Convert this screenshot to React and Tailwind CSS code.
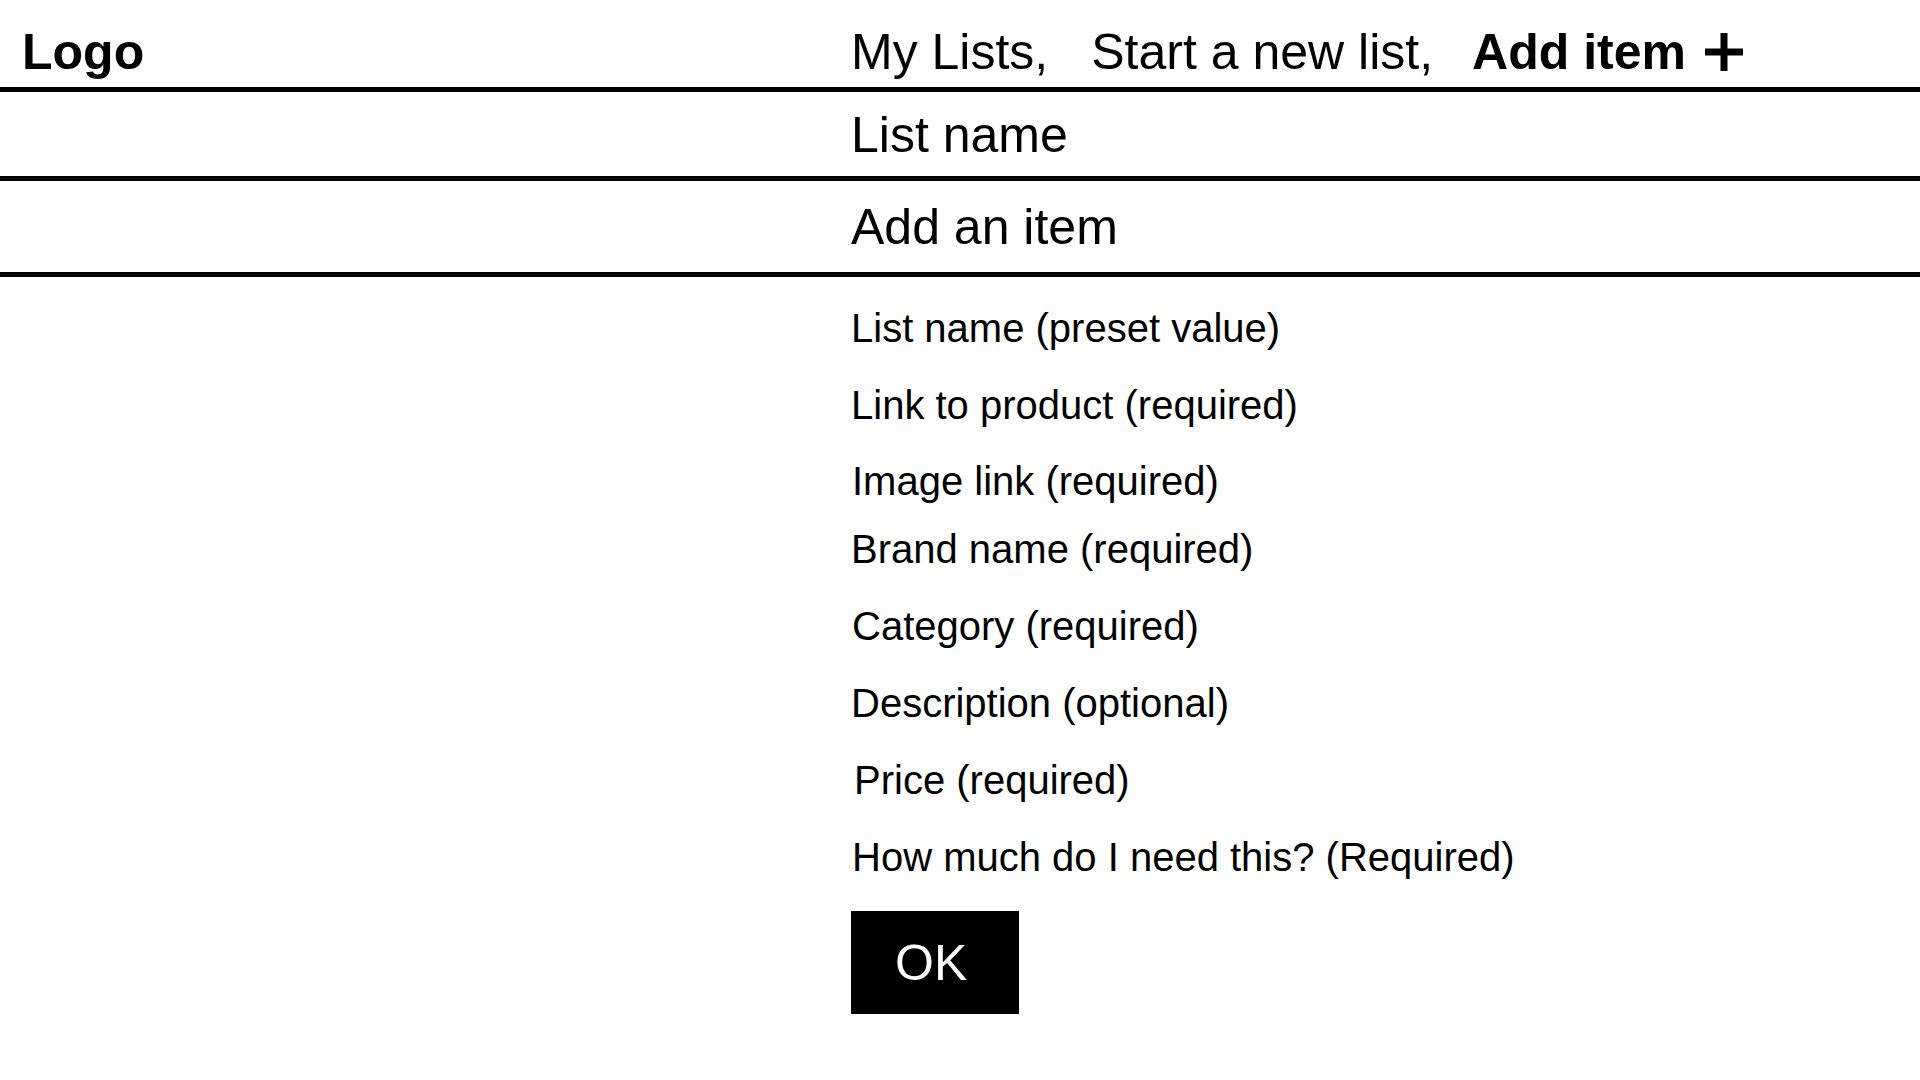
const fields = [
  { label: "List name (preset value)", cls: "mt-0" },
  { label: "Link to product (required)", cls: "mt-[31px]" },
  { label: "Image link (required)", cls: "mt-[30px] pl-[1px]" },
  { label: "Brand name (required)", cls: "mt-[22px]" },
  { label: "Category (required)", cls: "mt-[31px] pl-[1px]" },
  { label: "Description (optional)", cls: "mt-[31px]" },
  { label: "Price (required)", cls: "mt-[31px] pl-[3px]" },
  { label: "How much do I need this? (Required)", cls: "mt-[31px] pl-[1px]" },
]

const App = () => {
  return (
    <div className="min-h-screen w-full bg-white text-black font-['Liberation_Sans',Arial,sans-serif]">
      {/* top bar */}
      <div className="flex h-[92px] items-end pb-[6px] border-b-[5px] border-black">
        <div className="w-[851px] pl-[22px] text-[50px] font-bold leading-[1.15]">Logo</div>
        <nav className="flex items-center text-[50px] leading-[1.15]">
          <a href="#">My Lists,</a>
          <a href="#" className="ml-[43px]">Start a new list,</a>
          <a href="#" className="ml-[39px] flex items-center font-bold">
            Add item
            <svg className="ml-[18px]" width="40" height="40" viewBox="0 0 40 40">
              <path d="M20 1v38M1 20h38" stroke="black" strokeWidth="7" fill="none" />
            </svg>
          </a>
        </nav>
      </div>

      <div className="flex h-[89px] items-start pt-[15px] border-b-[5px] border-black pl-[851px]">
        <div className="text-[50px] leading-[1.15]">List name</div>
      </div>

      <div className="flex h-[96px] items-start pt-[18px] border-b-[5px] border-black pl-[851px]">
        <div className="text-[50px] leading-[1.15]">Add an item</div>
      </div>

      <form className="flex flex-col items-start pl-[851px] pt-[28px]" onSubmit={(e) => e.preventDefault()}>
        {fields.map((f) => (
          <label key={f.label} className={"text-[40px] leading-[1.15] " + f.cls}>
            {f.label}
          </label>
        ))}
        <button
          type="submit"
          className="mt-[31px] flex h-[103px] w-[168px] items-center bg-black pl-[44px] text-[50px] leading-none text-white"
        >
          OK
        </button>
      </form>
    </div>
  )
}

export default App
